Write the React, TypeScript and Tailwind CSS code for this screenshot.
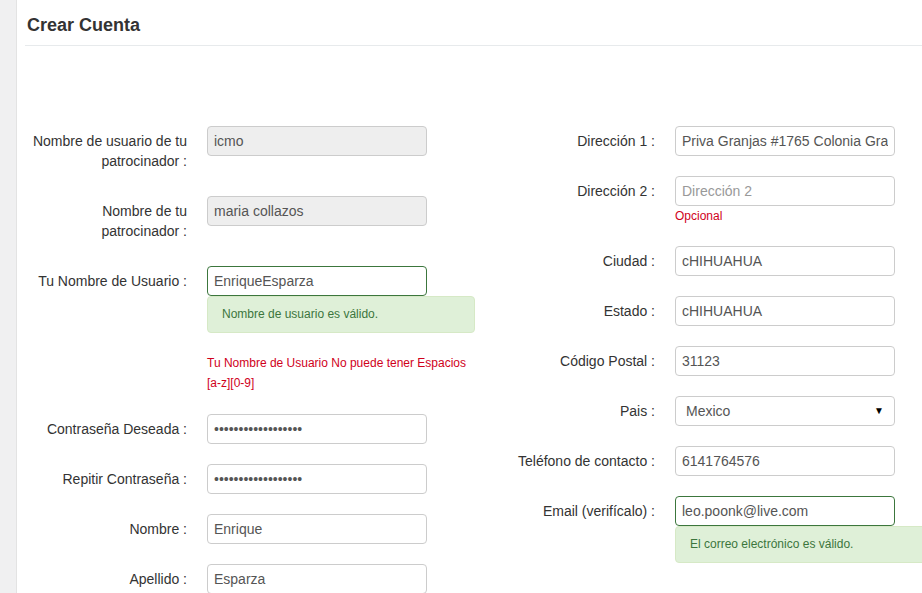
import { ReactNode } from "react";

interface RowProps {
  label: string;
  tall?: boolean;
  children: ReactNode;
}

function Row({ label, tall, children }: RowProps) {
  return (
    <div className={`mb-5 flex gap-5 ${tall ? "min-h-[50px]" : ""}`}>
      <label className="w-[162px] shrink-0 pt-[5px] text-right leading-5 text-[#333]">
        {label}
      </label>
      <div className="w-[268px] shrink-0">{children}</div>
    </div>
  );
}

const inputBase =
  "block h-[30px] w-[220px] rounded-[4px] border px-[6px] text-[14px] text-[#555] outline-none placeholder:text-[#999]";

function TextInput({
  value,
  placeholder,
  disabled,
  valid,
  type = "text",
}: {
  value?: string;
  placeholder?: string;
  disabled?: boolean;
  valid?: boolean;
  type?: string;
}) {
  return (
    <input
      type={type}
      defaultValue={value}
      placeholder={placeholder}
      readOnly={disabled}
      className={`${inputBase} ${
        valid ? "border-[#3c763d]" : "border-[#ccc]"
      } ${disabled ? "bg-[#eee]" : "bg-white"}`}
    />
  );
}

function ValidAlert({ text }: { text: string }) {
  return (
    <div className="w-[268px] rounded-[4px] border border-[#d6e9c6] bg-[#dff0d8] px-[14px] py-[9px] text-[12px] leading-[17px] text-[#3c763d]">
      {text}
    </div>
  );
}

export default function App() {
  return (
    <div className="flex min-h-screen w-full overflow-hidden bg-white font-['Liberation_Sans',Arial,sans-serif] text-[14px] text-[#333]">
      {/* franja lateral */}
      <aside className="w-[17px] shrink-0 border-r border-[#e3e3e3] bg-[#f0f0f1]" />

      <main className="min-w-0 flex-1 pl-2">
        {/* Encabezado */}
        <div className="border-b border-[#e7eaec] pt-[15px] pb-[10px]">
          <h2 className="pl-[2px] text-[18px] font-bold leading-5 text-[#333]">
            Crear Cuenta
          </h2>
        </div>

        {/* Formulario */}
        <div className="flex gap-[18px] pt-[80px]">
          <div className="w-[450px] shrink-0">
            <Row label="Nombre de usuario de tu patrocinador :" tall>
              <TextInput value="icmo" disabled />
            </Row>
            <Row label="Nombre de tu patrocinador :" tall>
              <TextInput value="maria collazos" disabled />
            </Row>
            <Row label="Tu Nombre de Usuario :">
              <TextInput value="EnriqueEsparza" valid />
              <ValidAlert text="Nombre de usuario es válido." />
              <p className="mt-5 w-[280px] pb-[1px] text-[12px] leading-5 text-[#d0011b]">
                Tu Nombre de Usuario No puede tener Espacios
                <br />
                [a-z][0-9]
              </p>
            </Row>
            <Row label="Contraseña Deseada :">
              <TextInput type="password" value="enriqueesparza1234" />
            </Row>
            <Row label="Repitir Contraseña :">
              <TextInput type="password" value="enriqueesparza1234" />
            </Row>
            <Row label="Nombre :">
              <TextInput value="Enrique" />
            </Row>
            <Row label="Apellido :">
              <TextInput value="Esparza" />
            </Row>
          </div>

          <div className="w-[450px] shrink-0">
            <Row label="Dirección 1 :">
              <TextInput value="Priva Granjas #1765 Colonia Granjas" />
            </Row>
            <Row label="Dirección 2 :">
              <TextInput placeholder="Dirección 2" />
              <p className="text-[12px] leading-5 text-[#d0011b]">Opcional</p>
            </Row>
            <Row label="Ciudad :">
              <TextInput value="cHIHUAHUA" />
            </Row>
            <Row label="Estado :">
              <TextInput value="cHIHUAHUA" />
            </Row>
            <Row label="Código Postal :">
              <TextInput value="31123" />
            </Row>
            <Row label="Pais :">
              <div className="relative w-[220px]">
                <select
                  defaultValue="Mexico"
                  className="block h-[30px] w-[220px] appearance-none rounded-[4px] border border-[#ccc] bg-white pl-[10px] text-[14px] text-[#555] outline-none"
                >
                  <option>Mexico</option>
                  <option>Estados Unidos</option>
                </select>
                <span className="pointer-events-none absolute right-[11px] top-[9px] text-[10px] leading-3 text-black">
                  ▼
                </span>
              </div>
            </Row>
            <Row label="Teléfono de contacto :">
              <TextInput value="6141764576" />
            </Row>
            <Row label="Email (verifícalo) :">
              <TextInput value="leo.poonk@live.com" valid />
              <ValidAlert text="El correo electrónico es válido." />
            </Row>
          </div>
        </div>
      </main>
    </div>
  );
}
